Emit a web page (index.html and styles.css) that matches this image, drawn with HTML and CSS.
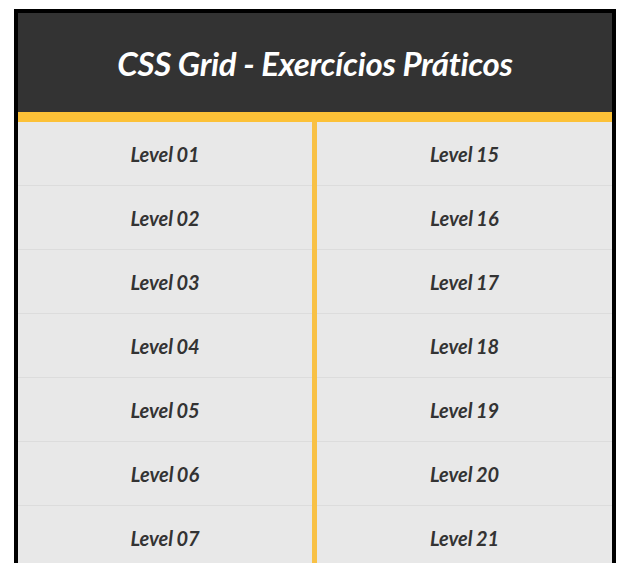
FILE: index.html
```html
<!DOCTYPE html>
<html lang="pt">
<head>
<meta charset="utf-8">
<title>CSS Grid - Exercícios Práticos</title>
<link rel="stylesheet" href="styles.css">
</head>
<body>
<div class="frame">
  <header class="header">
    <h1 class="title">CSS Grid - Exercícios Práticos</h1>
  </header>
  <ul class="levels">
    <li class="level"><a href="#">Level 01</a></li>
    <li class="level"><a href="#">Level 02</a></li>
    <li class="level"><a href="#">Level 03</a></li>
    <li class="level"><a href="#">Level 04</a></li>
    <li class="level"><a href="#">Level 05</a></li>
    <li class="level"><a href="#">Level 06</a></li>
    <li class="level"><a href="#">Level 07</a></li>
    <li class="level"><a href="#">Level 08</a></li>
    <li class="level"><a href="#">Level 09</a></li>
    <li class="level"><a href="#">Level 10</a></li>
    <li class="level"><a href="#">Level 11</a></li>
    <li class="level"><a href="#">Level 12</a></li>
    <li class="level"><a href="#">Level 13</a></li>
    <li class="level"><a href="#">Level 14</a></li>
    <li class="level"><a href="#">Level 15</a></li>
    <li class="level"><a href="#">Level 16</a></li>
    <li class="level"><a href="#">Level 17</a></li>
    <li class="level"><a href="#">Level 18</a></li>
    <li class="level"><a href="#">Level 19</a></li>
    <li class="level"><a href="#">Level 20</a></li>
    <li class="level"><a href="#">Level 21</a></li>
    <li class="level"><a href="#">Level 22</a></li>
    <li class="level"><a href="#">Level 23</a></li>
    <li class="level"><a href="#">Level 24</a></li>
    <li class="level"><a href="#">Level 25</a></li>
    <li class="level"><a href="#">Level 26</a></li>
    <li class="level"><a href="#">Level 27</a></li>
    <li class="level"><a href="#">Level 28</a></li>
  </ul>
</div>
</body>
</html>
```
FILE: styles.css
```css
* { box-sizing: border-box; }
html, body { margin: 0; padding: 0; background: #fff; }
body {
  font-family: Lato, "Open Sans", sans-serif;
  padding: 9px 0 0 14px;
}
.frame {
  width: 602px;
  border: 4px solid #000;
  background: #e8e8e8;
}
.header {
  background: #333333;
  border-bottom: 10px solid #fcc137;
  height: 109px;
  display: flex;
  align-items: center;
  justify-content: center;
}
.title {
  margin: 0;
  color: #fff;
  font-family: Lato, sans-serif;
  font-weight: 700;
  font-style: italic;
  font-size: 33px;
  letter-spacing: -0.3px;
}
.levels {
  list-style: none;
  margin: 0;
  padding: 0;
  display: grid;
  grid-template-columns: 294px 1fr;
  grid-template-rows: repeat(14, 64px);
  grid-auto-flow: column;
  column-gap: 5px;
  background: #f8c145;
}
.level {
  background: #e8e8e8;
  border-bottom: 1px solid #dcdcdc;
  display: flex;
  align-items: center;
  justify-content: center;
}
.level a {
  color: #333;
  text-decoration: none;
  font-weight: 700;
  font-style: italic;
  font-size: 20px;
  word-spacing: -1px;
}
```
